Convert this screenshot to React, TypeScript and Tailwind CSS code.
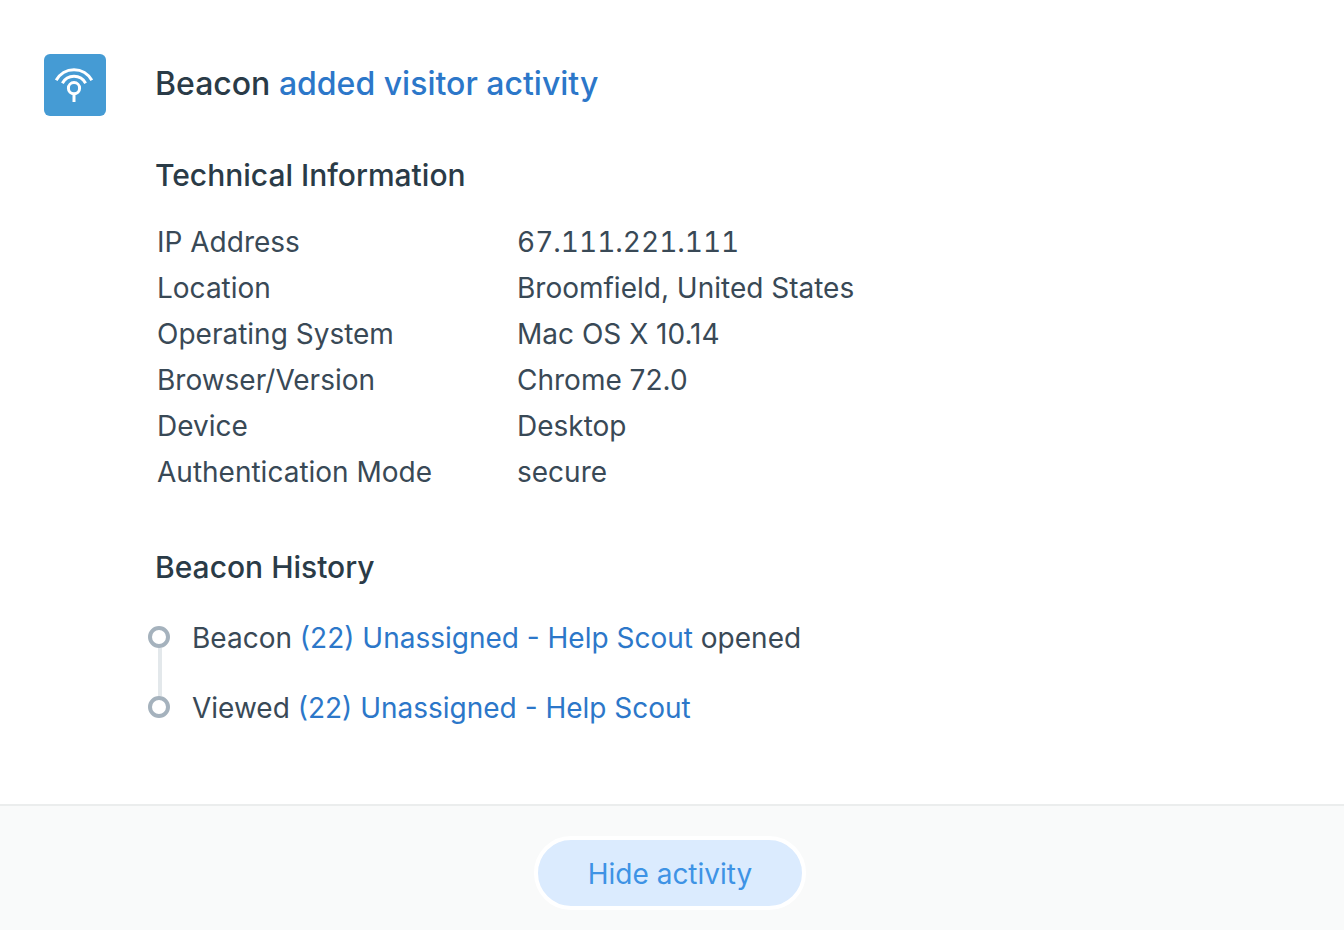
import React from 'react';

type InfoRow = {
  label: string;
  value: string;
  numeric?: boolean;
};

type HistoryItem = {
  id: number;
  before: string;
  link: string;
  after?: string;
};

const infoRows: InfoRow[] = [
  { label: 'IP Address', value: '67.111.221.111', numeric: true },
  { label: 'Location', value: 'Broomfield, United States' },
  { label: 'Operating System', value: 'Mac OS X 10.14' },
  { label: 'Browser/Version', value: 'Chrome 72.0' },
  { label: 'Device', value: 'Desktop' },
  { label: 'Authentication Mode', value: 'secure' },
];

const historyItems: HistoryItem[] = [
  {
    id: 1,
    before: 'Beacon',
    link: '(22) Unassigned - Help Scout',
    after: 'opened',
  },
  { id: 2, before: 'Viewed', link: '(22) Unassigned - Help Scout' },
];

const BeaconIcon: React.FC = () => (
  <svg
    viewBox="0 0 62 62"
    className="size-[62px] shrink-0"
    fill="none"
    stroke="white"
    strokeWidth="3"
    aria-hidden="true"
  >
    <rect width="62" height="62" rx="6" fill="#459bd4" stroke="none" />
    <path d="M12.2 26.3A20.2 20.2 0 0 1 47.8 26.3" />
    <path d="M18.4 29.2A13.2 13.2 0 0 1 41.6 29.2" />
    <circle cx="30" cy="34.2" r="5.6" />
    <path d="M30 39.5V48" />
  </svg>
);

const App: React.FC = () => {
  return (
    <main className="min-h-screen flex flex-col bg-white font-['Inter','Liberation_Sans',sans-serif] text-[28px] text-[#394956]">
      <section className="flex items-start gap-[49px] px-11 pt-[54px] pb-[76px]">
        <BeaconIcon />
        <div className="flex-1">
          <h1 className="text-[32px] leading-[60px] font-medium text-[#2a3b47]">
            Beacon{' '}
            <a href="#activity" className="text-[#2c77c9]">
              added visitor activity
            </a>
          </h1>

          <h2 className="mt-10 mb-[23px] text-[30px] leading-[42px] font-medium text-[#2a3b47]">
            Technical Information
          </h2>
          <table>
            <tbody>
              {infoRows.map((row) => (
                <tr key={row.label}>
                  <th
                    scope="row"
                    className="w-[362px] p-0 pl-0.5 text-left font-normal leading-[46px]"
                  >
                    {row.label}
                  </th>
                  <td
                    className={`p-0 leading-[46px] ${
                      row.numeric ? 'tabular-nums' : ''
                    }`}
                  >
                    {row.value}
                  </td>
                </tr>
              ))}
            </tbody>
          </table>

          <h2 className="mt-[51px] mb-[30px] text-[30px] leading-[42px] font-medium text-[#2a3b47]">
            Beacon History
          </h2>
          <ul>
            {historyItems.map((item, index) => (
              <HistoryEntry
                key={item.id}
                item={item}
                isLast={index === historyItems.length - 1}
              />
            ))}
          </ul>
        </div>
      </section>

      <footer className="flex flex-1 items-start justify-center border-t-2 border-[#ebeded] bg-[#f9fafa] pt-[30px]">
        <button
          type="button"
          className="-ml-1 h-[74px] cursor-pointer rounded-full border-4 border-white bg-[#dbebfe] px-[50px] pt-0.5 text-[#3e93e5]"
        >
          Hide activity
        </button>
      </footer>
    </main>
  );
};

// Sub component
const HistoryEntry: React.FC<{ item: HistoryItem; isLast: boolean }> = ({
  item,
  isLast,
}) => (
  <li className={`-ml-[7px] flex gap-[22px] ${isLast ? '' : 'h-[70px]'}`}>
    <div className="flex flex-col items-center pt-2">
      <span className="size-[22px] shrink-0 rounded-full border-4 border-[#a5b2bd]" />
      {!isLast && <span className="ml-0.5 -mb-2 w-1 flex-1 bg-[#e3e8eb]" />}
    </div>
    <p className="leading-10">
      {item.before}{' '}
      <a href="#history" className="text-[#2c77c9]">
        {item.link}
      </a>
      {item.after && ` ${item.after}`}
    </p>
  </li>
);

export default App;
